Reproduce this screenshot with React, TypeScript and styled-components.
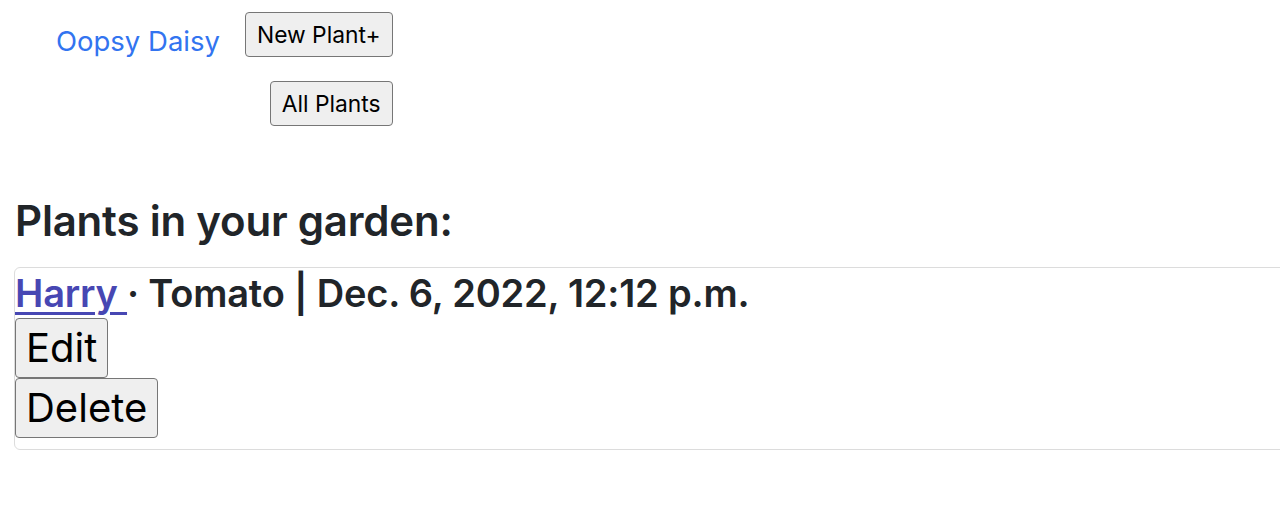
import React from "react";
import styled, { createGlobalStyle } from "styled-components";

const GlobalStyle = createGlobalStyle`
  html, body {
    margin: 0;
    padding: 0;
    background: #ffffff;
    overflow: hidden;
  }
  body {
    font-family: Inter, "Noto Sans", "Liberation Sans", sans-serif;
    color: #212529;
  }
`;

const Navbar = styled.nav`
  display: flex;
  align-items: flex-start;
  padding: 12px 0 0 56px;
`;

const Brand = styled.a`
  font-size: 27.5px;
  line-height: 34px;
  color: #3274f0;
  text-decoration: none;
  margin-top: 12px;
`;

const NavList = styled.div`
  display: flex;
  flex-direction: column;
  align-items: flex-end;
  gap: 24px;
  margin-left: 25px;
`;

const NavButton = styled.button`
  font-family: Inter, "Noto Sans", "Liberation Sans", sans-serif;
  font-size: 22.8px;
  line-height: 27px;
  color: #000;
  background: #efefef;
  border: 1px solid #767676;
  border-radius: 4px;
  padding: 8px 11px;
  height: 45px;
`;

const Main = styled.main`
  padding: 70px 0 0 14px;
`;

const Heading = styled.h1`
  margin: 0 0 21px 1px;
  font-size: 42px;
  font-weight: 600;
  line-height: 50px;
  letter-spacing: -0.2px;
`;

const Card = styled.div`
  width: 1300px;
  border: 1px solid #dcdcdc;
  border-radius: 6px;
  padding: 0 0 11px 0;
`;

const Entry = styled.h2`
  margin: 0;
  font-size: 38px;
  font-weight: 600;
  line-height: 50px;
  letter-spacing: -0.2px;
`;

const PlantLink = styled.a`
  color: #4747b3;
  text-decoration: underline;
  text-decoration-thickness: 3px;
  text-underline-offset: 5px;
`;

const Actions = styled.div`
  display: flex;
  flex-direction: column;
  align-items: flex-start;
`;

const ActionButton = styled.button`
  font-family: Inter, "Noto Sans", "Liberation Sans", sans-serif;
  font-size: 40px;
  line-height: 48px;
  color: #000;
  background: #efefef;
  border: 1px solid #767676;
  border-radius: 4px;
  padding: 5px 10px;
  height: 60px;
`;

export default function App() {
  return (
    <>
      <GlobalStyle />
      <Navbar>
        <Brand href="#">Oopsy Daisy</Brand>
        <NavList>
          <NavButton>New Plant+</NavButton>
          <NavButton>All Plants</NavButton>
        </NavList>
      </Navbar>
      <Main>
        <Heading>Plants in your garden:</Heading>
        <Card>
          <Entry>
            <PlantLink href="#">Harry </PlantLink> · Tomato | Dec. 6, 2022, 12:12 p.m.
          </Entry>
          <Actions>
            <ActionButton>Edit</ActionButton>
            <ActionButton>Delete</ActionButton>
          </Actions>
        </Card>
      </Main>
    </>
  );
}
